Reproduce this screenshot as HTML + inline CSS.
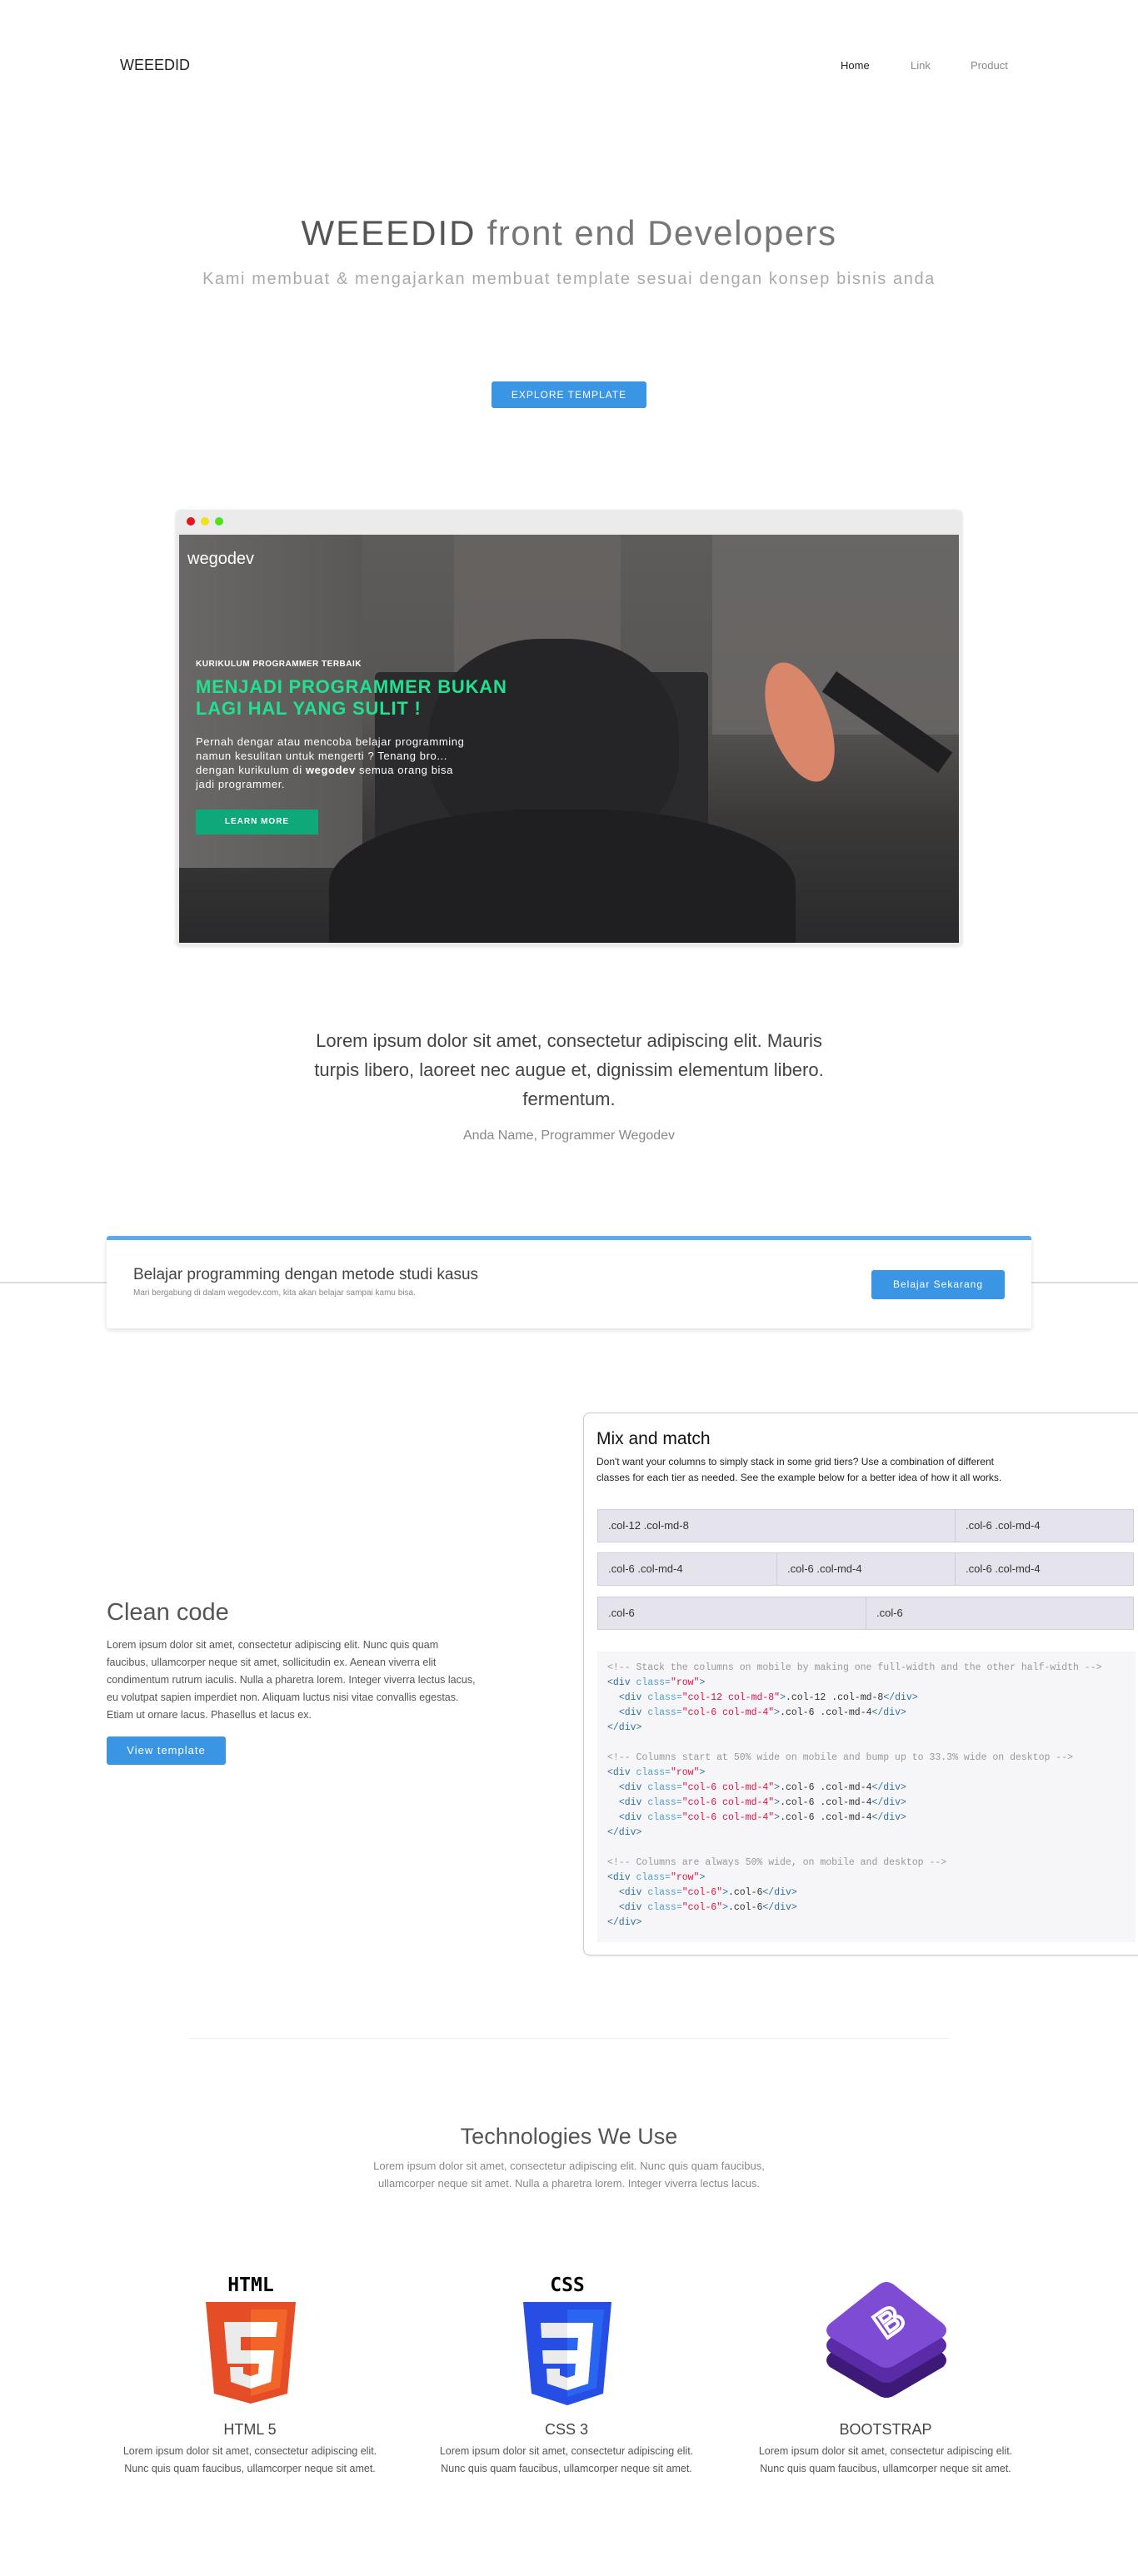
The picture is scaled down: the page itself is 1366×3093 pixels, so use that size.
<!DOCTYPE html>
<html><head><meta charset="utf-8">
<style>
*{margin:0;padding:0;box-sizing:border-box}
body{width:1366px;height:3093px;position:relative;background:#fff;font-family:"Liberation Sans",sans-serif;color:#555;overflow:hidden}
.a{position:absolute}
.c{text-align:center}
.btn{position:absolute;background:#3a96e4;color:#fff;border-radius:3px;text-align:center;font-size:12px;letter-spacing:1px}
pre{font-family:"Liberation Mono",monospace;font-size:11.5px;line-height:18px;color:#333}
.cm{color:#999}.tg{color:#2f6f9f}.at{color:#4f9fcf}.st{color:#d14}
.cell{position:absolute;background:#e5e3ec;border:1px solid #cfcbd9;font-size:13px;color:#333;padding-left:12px;line-height:38px}
</style></head><body>

<div class="a" style="left:144px;top:68px;font-size:18px;color:#222">WEEEDID</div>
<div class="a" style="left:1009px;top:71px;font-size:13px;color:#222">Home</div>
<div class="a" style="left:1093px;top:71px;font-size:13px;color:#8a8a8a">Link</div>
<div class="a" style="left:1165px;top:71px;font-size:13px;color:#8a8a8a">Product</div>

<div class="a c" style="left:0;width:1366px;top:256px;font-size:42px;color:#555;letter-spacing:1.5px"><span style="letter-spacing:2px">WEEEDID</span> <span style="color:#777">front end Developers</span></div>
<div class="a c" style="left:0;width:1366px;top:324px;font-size:20px;color:#aaa;letter-spacing:1.6px">Kami membuat &amp; mengajarkan membuat template sesuai dengan konsep bisnis anda</div>
<div class="btn" style="left:590px;top:458px;width:186px;height:32px;line-height:32px;font-size:12px">EXPLORE TEMPLATE</div>

<!-- browser mockup -->
<div class="a" style="left:211px;top:612px;width:944px;height:524px;background:#ebebeb;border-radius:6px;box-shadow:0 1px 4px rgba(0,0,0,.12)"></div>
<div class="a" style="left:224px;top:621px;width:10px;height:10px;border-radius:50%;background:#e8141b"></div>
<div class="a" style="left:241px;top:621px;width:10px;height:10px;border-radius:50%;background:#f1e11a"></div>
<div class="a" style="left:258px;top:621px;width:10px;height:10px;border-radius:50%;background:#52e01f"></div>
<div class="a" style="left:215px;top:642px;width:936px;height:490px;overflow:hidden;background:linear-gradient(180deg,#5e5c5a 0%,#575553 45%,#3a3938 70%,#2a2a2c 100%)">
  <div class="a" style="left:0;top:0;width:220px;height:400px;background:linear-gradient(90deg,#6a6866,#5a5856)"></div>
  <div class="a" style="left:330px;top:0;width:200px;height:250px;background:#6a6866;opacity:.6"></div>
  <div class="a" style="left:640px;top:0;width:296px;height:240px;background:#6d6b69;opacity:.7"></div>
  <div class="a" style="left:235px;top:165px;width:400px;height:270px;background:#2b2b2d;border-radius:6px"></div>
  <div class="a" style="left:300px;top:125px;width:300px;height:260px;background:#252527;border-radius:45%"></div>
  <div class="a" style="left:180px;top:330px;width:560px;height:200px;background:#1f1f22;border-radius:45% 45% 0 0"></div>
  <div class="a" style="left:710px;top:150px;width:70px;height:150px;background:#d9866a;border-radius:50%;transform:rotate(-20deg)"></div>
  <div class="a" style="left:765px;top:210px;width:170px;height:30px;background:#1f1f21;transform:rotate(35deg)"></div>
  <div class="a" style="left:10px;top:18px;font-size:20px;color:#fff">wegodev</div>
  <div class="a" style="left:20px;top:150px;font-size:10px;color:#fff;font-weight:bold;letter-spacing:.5px">KURIKULUM PROGRAMMER TERBAIK</div>
  <div class="a" style="left:20px;top:170px;font-size:22px;line-height:26px;color:#21e08f;font-weight:bold;letter-spacing:.8px">MENJADI PROGRAMMER BUKAN<br>LAGI HAL YANG SULIT !</div>
  <div class="a" style="left:20px;top:240px;font-size:13px;line-height:17px;color:#fff;letter-spacing:.6px">Pernah dengar atau mencoba belajar programming<br>namun kesulitan untuk mengerti ? Tenang bro...<br>dengan kurikulum di <b>wegodev</b> semua orang bisa<br>jadi programmer.</div>
  <div class="a" style="left:20px;top:330px;width:147px;height:30px;background:#0ea87a;color:#fff;font-size:10px;font-weight:bold;letter-spacing:1px;text-align:center;line-height:30px">LEARN MORE</div>
</div>

<div class="a c" style="left:333px;width:700px;top:1232px;font-size:22px;line-height:35px;color:#444">Lorem ipsum dolor sit amet, consectetur adipiscing elit. Mauris<br>turpis libero, laoreet nec augue et, dignissim elementum libero.<br>fermentum.</div>
<div class="a c" style="left:0;width:1366px;top:1355px;font-size:16px;color:#888">Anda Name, Programmer Wegodev</div>

<div class="a" style="left:0;top:1539px;width:1366px;height:2px;background:#ddd"></div>
<div class="a" style="left:128px;top:1484px;width:1110px;height:111px;background:#fff;border-top:5px solid #5aaaee;border-radius:3px;box-shadow:0 2px 6px rgba(0,0,0,.14)"></div>
<div class="a" style="left:160px;top:1520px;font-size:19px;color:#444">Belajar programming dengan metode studi kasus</div>
<div class="a" style="left:160px;top:1547px;font-size:10px;color:#888">Mari bergabung di dalam wegodev.com, kita akan belajar sampai kamu bisa.</div>
<div class="btn" style="left:1046px;top:1525px;width:160px;height:35px;line-height:35px;font-size:12px">Belajar Sekarang</div>

<div class="a" style="left:128px;top:1920px;font-size:29px;color:#555">Clean code</div>
<div class="a" style="left:128px;top:1965px;width:450px;font-size:12.5px;line-height:21px;color:#555">Lorem ipsum dolor sit amet, consectetur adipiscing elit. Nunc quis quam faucibus, ullamcorper neque sit amet, sollicitudin ex. Aenean viverra elit condimentum rutrum iaculis. Nulla a pharetra lorem. Integer viverra lectus lacus, eu volutpat sapien imperdiet non. Aliquam luctus nisi vitae convallis egestas. Etiam ut ornare lacus. Phasellus et lacus ex.</div>
<div class="btn" style="left:128px;top:2085px;width:143px;height:34px;line-height:34px;font-size:13px">View template</div>

<div class="a" style="left:700px;top:1696px;width:700px;height:652px;border:1px solid #ccc;border-radius:8px;background:#fff;box-shadow:0 1px 3px rgba(0,0,0,.08)"></div>
<div class="a" style="left:716px;top:1716px;font-size:21px;color:#111">Mix and match</div>
<div class="a" style="left:716px;top:1746px;font-size:12px;line-height:19px;color:#222">Don't want your columns to simply stack in some grid tiers? Use a combination of different<br>classes for each tier as needed. See the example below for a better idea of how it all works.</div>
<div class="cell" style="left:717px;top:1812px;width:430px;height:40px">.col-12 .col-md-8</div>
<div class="cell" style="left:1146px;top:1812px;width:215px;height:40px">.col-6 .col-md-4</div>
<div class="cell" style="left:717px;top:1864px;width:216px;height:40px">.col-6 .col-md-4</div>
<div class="cell" style="left:932px;top:1864px;width:215px;height:40px">.col-6 .col-md-4</div>
<div class="cell" style="left:1146px;top:1864px;width:215px;height:40px">.col-6 .col-md-4</div>
<div class="cell" style="left:717px;top:1917px;width:323px;height:40px">.col-6</div>
<div class="cell" style="left:1039px;top:1917px;width:322px;height:40px">.col-6</div>
<div class="a" style="left:717px;top:1983px;width:646px;height:349px;background:#f6f6f8"></div>
<pre class="a" style="left:729px;top:1994px"><span class="cm">&lt;!-- Stack the columns on mobile by making one full-width and the other half-width --&gt;</span>
<span class="tg">&lt;div</span> <span class="at">class=</span><span class="st">"row"</span><span class="tg">&gt;</span>
  <span class="tg">&lt;div</span> <span class="at">class=</span><span class="st">"col-12 col-md-8"</span><span class="tg">&gt;</span>.col-12 .col-md-8<span class="tg">&lt;/div&gt;</span>
  <span class="tg">&lt;div</span> <span class="at">class=</span><span class="st">"col-6 col-md-4"</span><span class="tg">&gt;</span>.col-6 .col-md-4<span class="tg">&lt;/div&gt;</span>
<span class="tg">&lt;/div&gt;</span>

<span class="cm">&lt;!-- Columns start at 50% wide on mobile and bump up to 33.3% wide on desktop --&gt;</span>
<span class="tg">&lt;div</span> <span class="at">class=</span><span class="st">"row"</span><span class="tg">&gt;</span>
  <span class="tg">&lt;div</span> <span class="at">class=</span><span class="st">"col-6 col-md-4"</span><span class="tg">&gt;</span>.col-6 .col-md-4<span class="tg">&lt;/div&gt;</span>
  <span class="tg">&lt;div</span> <span class="at">class=</span><span class="st">"col-6 col-md-4"</span><span class="tg">&gt;</span>.col-6 .col-md-4<span class="tg">&lt;/div&gt;</span>
  <span class="tg">&lt;div</span> <span class="at">class=</span><span class="st">"col-6 col-md-4"</span><span class="tg">&gt;</span>.col-6 .col-md-4<span class="tg">&lt;/div&gt;</span>
<span class="tg">&lt;/div&gt;</span>

<span class="cm">&lt;!-- Columns are always 50% wide, on mobile and desktop --&gt;</span>
<span class="tg">&lt;div</span> <span class="at">class=</span><span class="st">"row"</span><span class="tg">&gt;</span>
  <span class="tg">&lt;div</span> <span class="at">class=</span><span class="st">"col-6"</span><span class="tg">&gt;</span>.col-6<span class="tg">&lt;/div&gt;</span>
  <span class="tg">&lt;div</span> <span class="at">class=</span><span class="st">"col-6"</span><span class="tg">&gt;</span>.col-6<span class="tg">&lt;/div&gt;</span>
<span class="tg">&lt;/div&gt;</span></pre>

<div class="a" style="left:227px;top:2447px;width:912px;height:1px;background:#eee"></div>

<div class="a c" style="left:0;width:1366px;top:2550px;font-size:27px;color:#555">Technologies We Use</div>
<div class="a c" style="left:0;width:1366px;top:2590px;font-size:13px;line-height:21px;color:#888">Lorem ipsum dolor sit amet, consectetur adipiscing elit. Nunc quis quam faucibus,<br>ullamcorper neque sit amet. Nulla a pharetra lorem. Integer viverra lectus lacus.</div>

<!-- HTML5 -->
<div class="a c" style="left:250px;width:102px;top:2731px;font-size:23px;font-weight:900;color:#000;font-family:'DejaVu Sans Mono',monospace">HTML</div>
<svg class="a" style="left:247px;top:2764px" width="108" height="122" viewBox="0 0 108 122">
<path d="M0 0H108L98 110 54 122 10 110Z" fill="#e44d26"/><path d="M54 9V113L89 103 98 9Z" fill="#f16529"/>
<path d="M22 24H86L84 42H42V58H82L78 96 54 104 30 96 29 78H45V86L54 89 63 86 64 74H26Z" fill="#ebebeb"/>
<path d="M54 24H86L84 42H54V58H82L78 96 54 104V89L63 86 64 74H54Z" fill="#fff"/></svg>
<!-- CSS3 -->
<div class="a c" style="left:630px;width:102px;top:2731px;font-size:23px;font-weight:900;color:#000;font-family:'DejaVu Sans Mono',monospace">CSS</div>
<svg class="a" style="left:628px;top:2764px" width="106" height="124" viewBox="0 0 106 124">
<path d="M0 0H106L96 110 53 124 10 110Z" fill="#264de4"/><path d="M53 9V114L88 103 97 9Z" fill="#2965f1"/>
<path d="M21 25H84L78 98 53 106 29 98 28 80H44V88L53 91 62 88 63 74H24L23 58H65L66 43H22Z" fill="#ebebeb"/>
<path d="M53 25H84L78 98 53 106V91L62 88 63 74H53V58H65L66 43H53Z" fill="#fff"/></svg>
<!-- Bootstrap -->
<svg class="a" style="left:988px;top:2740px" width="152" height="142" viewBox="0 0 152 142">
<path d="M66 36Q76 28 86 36L144 86Q152 94 144 102L86 136Q76 142 66 136L8 102Q0 94 8 86Z" fill="#3d1a78"/>
<path d="M66 18Q76 10 86 18L144 68Q152 76 144 84L86 118Q76 124 66 118L8 84Q0 76 8 68Z" fill="#5a2ba6"/>
<path d="M66 4Q76 -4 86 4L144 50Q152 58 144 66L86 100Q76 106 66 100L8 66Q0 58 8 50Z" fill="#7e4bd4"/>
<g transform="translate(80 48) rotate(-35)"><text x="0" y="14" text-anchor="middle" font-family="Liberation Sans" font-weight="bold" font-size="44" fill="none" stroke="#fff" stroke-width="4">B</text></g></svg>

<div class="a c" style="left:130px;width:340px;top:2907px;font-size:18px;color:#444">HTML 5</div>
<div class="a c" style="left:510px;width:340px;top:2907px;font-size:18px;color:#444">CSS 3</div>
<div class="a c" style="left:893px;width:340px;top:2907px;font-size:18px;color:#444">BOOTSTRAP</div>
<div class="a c" style="left:130px;width:340px;top:2933px;font-size:12.5px;line-height:21px;color:#555">Lorem ipsum dolor sit amet, consectetur adipiscing elit.<br>Nunc quis quam faucibus, ullamcorper neque sit amet.</div>
<div class="a c" style="left:510px;width:340px;top:2933px;font-size:12.5px;line-height:21px;color:#555">Lorem ipsum dolor sit amet, consectetur adipiscing elit.<br>Nunc quis quam faucibus, ullamcorper neque sit amet.</div>
<div class="a c" style="left:893px;width:340px;top:2933px;font-size:12.5px;line-height:21px;color:#555">Lorem ipsum dolor sit amet, consectetur adipiscing elit.<br>Nunc quis quam faucibus, ullamcorper neque sit amet.</div>
</body></html>
